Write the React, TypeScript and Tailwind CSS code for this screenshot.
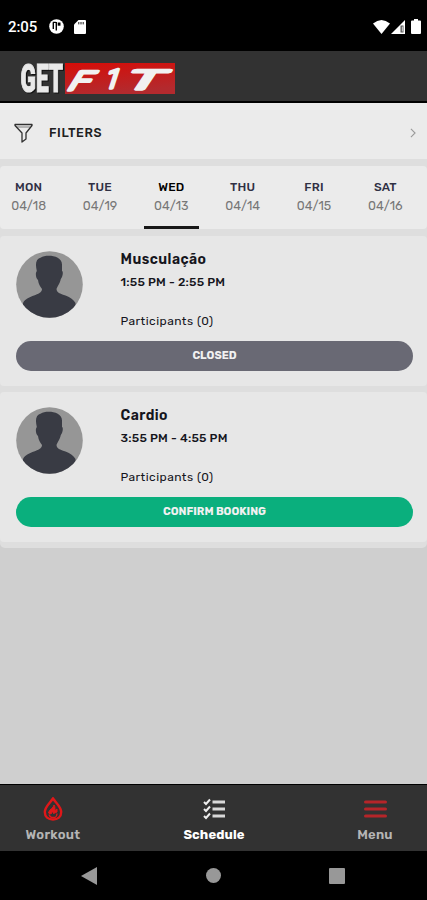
import clsx from "clsx";

interface Day {
	name: string;
	date: string;
}

interface Session {
	title: string;
	time: string;
	participants: number;
	open: boolean;
}

const days: Day[] = [
	{ name: "MON", date: "04/18" },
	{ name: "TUE", date: "04/19" },
	{ name: "WED", date: "04/13" },
	{ name: "THU", date: "04/14" },
	{ name: "FRI", date: "04/15" },
	{ name: "SAT", date: "04/16" },
];

const sessions: Session[] = [
	{ title: "Musculação", time: "1:55 PM - 2:55 PM", participants: 0, open: false },
	{ title: "Cardio", time: "3:55 PM - 4:55 PM", participants: 0, open: true },
];

function StatusBar() {
	return (
		<div className="flex h-[51px] shrink-0 items-center bg-black pt-[2px] pr-[6px] pl-[8px] text-white">
			<span className="w-[30px] whitespace-nowrap font-['Roboto',sans-serif] text-[15px] leading-5 font-medium tracking-[-0.1px]">
				2:05
			</span>
			<svg className="ml-[11px] h-[15px] w-[15px]" viewBox="0 0 15 15" aria-hidden="true">
				<circle cx="7.5" cy="7.5" r="7.3" fill="white" />
				<path d="M4.3 3.5v6.5M7.3 3v8.5M3.8 3.4h3" stroke="black" strokeWidth="1.4" fill="none" />
				<path d="M8.7 3.5h2.8v3.2H8.7z" fill="black" />
			</svg>
			<svg className="ml-[10px] h-[14px] w-[12px]" viewBox="0 0 12 14" aria-hidden="true">
				<path d="M4.5 0H11a1 1 0 0 1 1 1v12a1 1 0 0 1-1 1H1a1 1 0 0 1-1-1V4.5z" fill="white" />
				<path d="M4.8 2v2.4M7 2v2.4M9.2 2v2.4" stroke="black" strokeWidth="0.9" />
			</svg>
			<svg className="ml-auto h-[14px] w-[17px]" viewBox="0 0 17 14" aria-hidden="true">
				<path d="M0 3.5Q8.5-3.5 17 3.5L8.5 14z" fill="white" />
			</svg>
			<svg className="ml-[1px] h-[14px] w-[14px]" viewBox="0 0 14 14" aria-hidden="true">
				<path d="M14 0v14H0z" fill="white" />
				<path d="M9.5 5.5h3v7h-3z" fill="#555" />
				<path d="M11.3 6.5v5" stroke="white" strokeWidth="0.8" />
			</svg>
			<svg className="ml-[6px] h-[15px] w-[10px]" viewBox="0 0 10 15" aria-hidden="true">
				<path d="M3 0h4v1.5h2a1 1 0 0 1 1 1V14a1 1 0 0 1-1 1H1a1 1 0 0 1-1-1V2.5a1 1 0 0 1 1-1h2z" fill="white" />
			</svg>
		</div>
	);
}

function Logo() {
	return (
		<svg className="h-[34px] w-[156px] overflow-visible" viewBox="0 0 156 34" role="img" aria-label="Get Fit">
			<defs>
				<linearGradient id="logo-red" x1="0" y1="0" x2="0.3" y2="1">
					<stop offset="0" stopColor="#d60d08" />
					<stop offset="1" stopColor="#b32a2e" />
				</linearGradient>
			</defs>
			<rect x="45" y="2" width="110" height="31" fill="url(#logo-red)" />
			<text
				className="drop-shadow-[1.5px_1px_0_#111]"
				x="0.5"
				y="31"
				textLength="42.5"
				lengthAdjust="spacingAndGlyphs"
				fontFamily="'Roboto', sans-serif"
				fontWeight="900"
				fontSize="39"
				fill="#e9e9e9"
				stroke="#e9e9e9"
				strokeWidth="1.2"
			>
				GET
			</text>
			<g
				fontFamily="'Roboto', sans-serif"
				fontWeight="300"
				fontSize="26"
				fill="#f1f1f1"
				stroke="#f1f1f1"
				strokeWidth="3.4"
				strokeLinejoin="round"
			>
				<text transform="translate(46 28.5) skewX(-32)" textLength="21" lengthAdjust="spacingAndGlyphs">F</text>
				<text transform="translate(83 26.5) skewX(-18)" textLength="15" lengthAdjust="spacingAndGlyphs">1</text>
				<text transform="translate(102 27.5) skewX(-34)" textLength="36" lengthAdjust="spacingAndGlyphs">T</text>
			</g>
		</svg>
	);
}

function Avatar() {
	return (
		<svg className="h-[67px] w-[67px] shrink-0" viewBox="0 0 67 67" aria-hidden="true">
			<defs>
				<clipPath id="avatar-clip">
					<circle cx="33.5" cy="33.5" r="33.3" />
				</clipPath>
			</defs>
			<g clipPath="url(#avatar-clip)">
				<path d="M0 0h67v67H0z" fill="#969696" />
				<path
					d="M20.8 20C19 12 20 8 25 6.5c4-3 21-3 21 7V20c1.500 0 .8 6-1.200 8-1 5-3.300 7-4.300 10 0 4 5 5 9 6.500 5 2 8 4 10 7.500v17H7V52c2-4 7-6 11-7.500 4-1.500 8-3 8-6.500-2-3-3.500-5-4-9-2-1-3-7-1.200-9z"
					fill="#393b44"
				/>
			</g>
		</svg>
	);
}

function SessionCard({ session }: { session: Session }) {
	return (
		<article className="h-[150px] rounded-[4px] bg-[#e7e7e7] px-4 pt-[15px]">
			<div className="flex h-[90px]">
				<Avatar />
				<div className="ml-[37.5px] text-[#15151c]">
					<h2 className="mt-[1px] text-[14px] leading-4 font-semibold tracking-[0.45px]">{session.title}</h2>
					<p className="mt-[6px] text-[12px] leading-4 font-medium tracking-[0.2px]">{session.time}</p>
					<p className="mt-[23px] text-[12px] leading-4 tracking-[0.45px]">
						Participants ({session.participants})
					</p>
				</div>
			</div>
			<button
				type="button"
				className={clsx(
					"flex h-[30px] w-[397px] items-center justify-center rounded-full text-[11px] font-bold text-[#f1f1f1]",
					session.open ? "bg-[#0aaf7d]" : "bg-[#696974]",
				)}
			>
				{session.open ? "CONFIRM BOOKING" : "CLOSED"}
			</button>
		</article>
	);
}

function FlameIcon() {
	return (
		<svg className="h-[24px] w-[20px]" viewBox="0 0 20 24" fill="none" stroke="#df1719" aria-hidden="true">
			<path d="M10 1.5C7 6 1.8 10 1.8 15c0 5 3.5 7.5 8.2 7.5s8.2-2.500 8.200-7.500C18.200 10 13 6 10 1.500z" strokeWidth="2.4" />
			<path d="M11 8c0 3-5 4-5.500 8l2.500 1 1.500-3 1 2.500 3.500-1.500V12l-2 1.500C11.500 12 12.500 10 11 8z" fill="#df1719" strokeWidth="1" />
			<path d="M6 17.500c.5 1.500 1.500 2.500 2.500 3h3.500c1.500-.8 2-2 2-4" strokeWidth="1.4" />
		</svg>
	);
}

function ChecklistIcon() {
	return (
		<svg className="h-[22px] w-[23px]" viewBox="0 0 23 22" fill="none" stroke="#eee" aria-hidden="true">
			<path d="M1 4l2 2 4-4.500M1 11l2 2 4-4.500M1 18l2 2 4-4.500" strokeWidth="2" />
			<path d="M9.500 4H22M9.500 11H22M9.500 18H22" stroke="#d8d8d8" strokeWidth="2.8" />
		</svg>
	);
}

function BottomNav() {
	return (
		<nav className="flex h-[67px] shrink-0 justify-between border-t border-black bg-[#323232] pr-[17px] pl-[18px] text-[13px] leading-4 font-semibold text-[#b5b5b5]">
			<div className="flex w-[70px] flex-col items-center pt-[12px]">
				<FlameIcon />
				<span className="mt-[6px] tracking-[0.3px]">Workout</span>
			</div>
			<div className="flex w-[70px] flex-col items-center pt-[13px] text-white">
				<ChecklistIcon />
				<span className="mt-[7px] font-bold tracking-[0.1px]">Schedule</span>
			</div>
			<div className="flex w-[70px] flex-col items-center pt-[13px]">
				<svg className="h-[22px] w-[23px]" viewBox="0 0 23 22" stroke="#b52529" strokeWidth="3" strokeLinecap="round" aria-hidden="true">
					<path d="M1.500 4h20M1.500 11h20M1.500 18h20" />
				</svg>
				<span className="mt-[7px] tracking-[0.2px]">Menu</span>
			</div>
		</nav>
	);
}

export default function App() {
	return (
		<main className="flex h-[900px] w-[427px] flex-col overflow-hidden bg-[#cfcfcf] font-['Rubik','Inter',sans-serif]">
			<StatusBar />
			<header className="h-[52px] shrink-0 border-b-2 border-black bg-[#323232] pt-[10px] pl-[20px]">
				<Logo />
			</header>

			<div className="flex-1">
				<section className="rounded-b-[5px] bg-[#dedede] pb-[6px]">
					<div className="flex h-[56px] items-center bg-[#ebebeb] pt-[4px] pr-[11px] pl-[14px]">
						<svg className="h-[20px] w-[20px]" viewBox="0 0 20 20" fill="none" stroke="#303030" strokeWidth="1.3" strokeLinejoin="round" aria-hidden="true">
							<path d="M1 1.500h17v1L12 10v6l-4 3V10L1 2.500z" />
							<path d="M2 4h14" strokeWidth="0.6" />
						</svg>
						<span className="ml-[15px] pt-px text-[12.5px] font-medium tracking-[0.6px] text-[#202020]">FILTERS</span>
						<svg className="ml-auto h-[10px] w-[6px]" viewBox="0 0 7 12" fill="none" stroke="#999" strokeWidth="1.3" aria-hidden="true">
							<path d="M1 1l5 5-5 5" />
						</svg>
					</div>

					<div className="mt-[7px] mb-[7px] overflow-hidden rounded-[4px] bg-[#ebebeb]">
						<div className="-ml-[7px] grid h-[63px] w-[428px] grid-cols-6">
							{days.map((day) => (
								<div
									key={day.name}
									className={clsx(
										"mx-[8px] flex flex-col items-center border-b-[3px] pt-[13px] whitespace-nowrap",
										day.name === "WED" ? "border-[#181818] text-black" : "border-transparent text-[#303044]",
									)}
								>
									<span className="text-[12px] leading-4 font-medium tracking-[0.2px]">{day.name}</span>
									<span className="mt-[3px] text-[12.5px] leading-4 text-[#777]">{day.date}</span>
								</div>
							))}
						</div>
					</div>

					<div className="flex flex-col gap-[6px]">
						{sessions.map((session) => (
							<SessionCard key={session.title} session={session} />
						))}
					</div>
				</section>
			</div>

			<BottomNav />
			<div className="flex h-[49px] shrink-0 items-center justify-between bg-black pr-[82px] pl-[81px]">
				<svg className="h-[18px] w-[16px]" viewBox="0 0 16 18" aria-hidden="true">
					<path d="M16 0v18L0 9z" fill="#989898" />
				</svg>
				<div className="h-[15px] w-[15px] rounded-full bg-[#989898]" />
				<div className="h-[16px] w-[16px] rounded-[1px] bg-[#989898]" />
			</div>
		</main>
	);
}
